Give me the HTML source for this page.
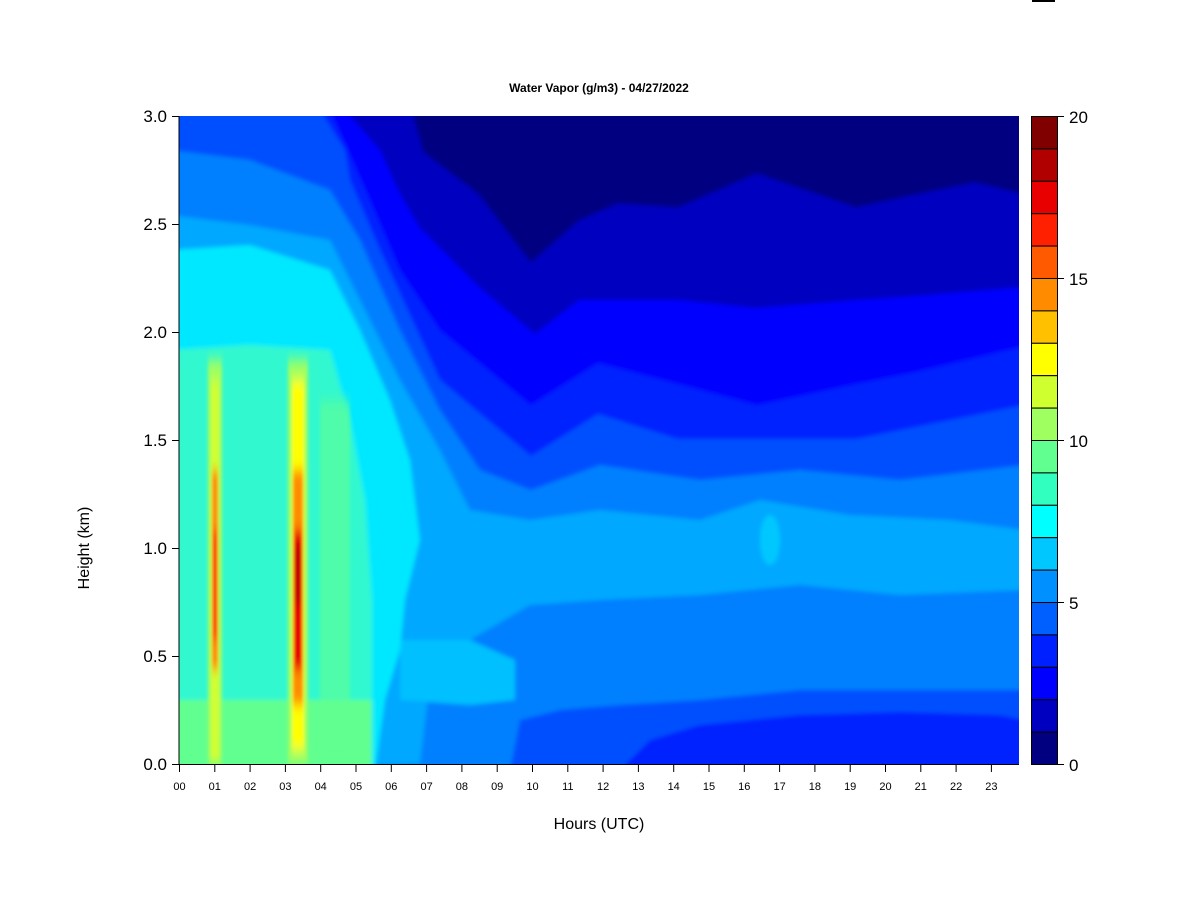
<!DOCTYPE html>
<html><head><meta charset="utf-8"><style>
html,body{margin:0;padding:0;background:#fff;}
svg{display:block;font-family:"Liberation Sans",Arial,sans-serif;}
</style></head><body>
<svg width="1200" height="900" viewBox="0 0 1200 900" xmlns="http://www.w3.org/2000/svg">
<rect width="1200" height="900" fill="#fff"/>
<rect x="1032" y="0" width="23" height="2" fill="#000"/>
<text x="599" y="92" font-size="12" font-weight="bold" text-anchor="middle">Water Vapor (g/m3) - 04/27/2022</text>
<defs>
<clipPath id="pc"><rect x="179" y="116" width="840" height="648"/></clipPath>
<filter id="bl" x="-5%" y="-5%" width="110%" height="110%"><feGaussianBlur stdDeviation="2"/></filter>
<filter id="bl2" x="-50%" y="-10%" width="200%" height="120%"><feGaussianBlur stdDeviation="1.5 6"/></filter>
</defs>
<g clip-path="url(#pc)">
<rect x="179" y="116" width="840" height="648" fill="#000080"/>
<g filter="url(#bl)">
<polygon fill="#0000c0" points="170,110 412,110 424,152 479,194 531,262 579,220 618,203 678,207 757,173 856,207 916,194 975,182 1025,194 1025,770 170,770"/>
<polygon fill="#0000ff" points="170,110 345,110 380,150 400,194 420,228 479,287 535,334 579,300 678,300 757,308 856,300 916,296 1025,287 1025,770 170,770"/>
<polygon fill="#0020ff" points="170,110 330,110 370,200 400,270 440,330 531,405 598,363 678,384 757,405 856,384 916,372 1025,346 1025,770 170,770"/>
<polygon fill="#0050ff" points="170,110 320,110 345,150 350,180 380,250 440,380 531,456 598,414 678,439 757,439 856,439 1025,405 1025,770 170,770"/>
<polygon fill="#0080ff" points="170,150 250,160 330,190 360,240 400,330 440,410 480,470 531,490 600,465 700,480 800,470 900,480 1025,465 1025,770 170,770"/>
<polygon fill="#00a8ff" points="170,215 250,225 330,240 360,300 400,380 440,450 470,510 530,520 600,510 700,520 760,500 850,515 950,520 1025,530 1025,590 900,595 800,585 700,595 600,600 530,605 470,640 430,680 420,764 170,770"/>
<polygon fill="#00c0ff" points="400,640 470,640 515,660 515,700 470,705 400,700"/>
<polygon fill="#00e8ff" points="170,250 250,245 330,270 360,330 390,400 410,460 420,540 405,600 400,650 385,700 375,770 170,770"/>
<ellipse cx="770" cy="540" rx="10" ry="25" fill="#00c8ff"/>
<polygon fill="#30f8d0" points="170,350 250,345 330,350 350,420 365,500 372,600 372,770 170,770"/>
<polygon fill="#60ff90" points="170,700 372,700 372,770 170,770"/>
<polygon fill="#0050ff" points="510,770 520,720 560,710 620,705 700,700 800,690 900,690 1025,690 1025,770"/>
<polygon fill="#0020ff" points="620,770 650,740 700,725 800,715 900,712 1000,715 1025,720 1025,770"/>
</g>
<g filter="url(#bl2)">
<rect x="208" y="360" width="14" height="404" fill="#a0ff60"/>
<rect x="288" y="360" width="20" height="404" fill="#a0ff60"/>
<rect x="320" y="400" width="30" height="340" fill="#60ff90" opacity="0.6"/>
<rect x="211" y="380" width="8" height="384" fill="#d0ff30"/>
<rect x="292" y="380" width="12" height="370" fill="#ffff00"/>
<rect x="212" y="470" width="6" height="200" fill="#ff8c00"/>
<rect x="293" y="470" width="10" height="235" fill="#ff8c00"/>
<rect x="213" y="530" width="4" height="110" fill="#ff2000"/>
<rect x="294" y="530" width="8" height="140" fill="#e80000"/>
<rect x="295" y="545" width="6" height="60" fill="#c00000"/>
</g>
</g>
<g stroke="#000" stroke-width="1" fill="none">
<line x1="179" y1="116" x2="179" y2="764"/>
<line x1="179" y1="764.5" x2="1019" y2="764.5"/>
<line x1="172" y1="116.5" x2="179" y2="116.5"/>
<line x1="172" y1="224.5" x2="179" y2="224.5"/>
<line x1="172" y1="332.5" x2="179" y2="332.5"/>
<line x1="172" y1="440.5" x2="179" y2="440.5"/>
<line x1="172" y1="548.5" x2="179" y2="548.5"/>
<line x1="172" y1="656.5" x2="179" y2="656.5"/>
<line x1="172" y1="764.5" x2="179" y2="764.5"/>
</g>
<g font-size="17" text-anchor="end">
<text x="167" y="122">3.0</text>
<text x="167" y="230">2.5</text>
<text x="167" y="338">2.0</text>
<text x="167" y="446">1.5</text>
<text x="167" y="554">1.0</text>
<text x="167" y="662">0.5</text>
<text x="167" y="770">0.0</text>
</g>
<text transform="translate(89,548) rotate(-90)" font-size="16" text-anchor="middle">Height (km)</text>
<text x="599" y="829" font-size="16" text-anchor="middle">Hours (UTC)</text>
<g stroke="#000">
<line x1="179.5" y1="764" x2="179.5" y2="772"/><line x1="214.8" y1="764" x2="214.8" y2="772"/><line x1="250.1" y1="764" x2="250.1" y2="772"/><line x1="285.4" y1="764" x2="285.4" y2="772"/><line x1="320.7" y1="764" x2="320.7" y2="772"/><line x1="356" y1="764" x2="356" y2="772"/><line x1="391.3" y1="764" x2="391.3" y2="772"/><line x1="426.6" y1="764" x2="426.6" y2="772"/><line x1="461.9" y1="764" x2="461.9" y2="772"/><line x1="497.2" y1="764" x2="497.2" y2="772"/><line x1="532.5" y1="764" x2="532.5" y2="772"/><line x1="567.8" y1="764" x2="567.8" y2="772"/><line x1="603.1" y1="764" x2="603.1" y2="772"/><line x1="638.4" y1="764" x2="638.4" y2="772"/><line x1="673.7" y1="764" x2="673.7" y2="772"/><line x1="709" y1="764" x2="709" y2="772"/><line x1="744.3" y1="764" x2="744.3" y2="772"/><line x1="779.6" y1="764" x2="779.6" y2="772"/><line x1="814.9" y1="764" x2="814.9" y2="772"/><line x1="850.2" y1="764" x2="850.2" y2="772"/><line x1="885.5" y1="764" x2="885.5" y2="772"/><line x1="920.8" y1="764" x2="920.8" y2="772"/><line x1="956.1" y1="764" x2="956.1" y2="772"/><line x1="991.4" y1="764" x2="991.4" y2="772"/>
</g>
<g font-size="11" text-anchor="middle">
<text x="179.5" y="790">00</text><text x="214.8" y="790">01</text><text x="250.1" y="790">02</text><text x="285.4" y="790">03</text><text x="320.7" y="790">04</text><text x="356" y="790">05</text><text x="391.3" y="790">06</text><text x="426.6" y="790">07</text><text x="461.9" y="790">08</text><text x="497.2" y="790">09</text><text x="532.5" y="790">10</text><text x="567.8" y="790">11</text><text x="603.1" y="790">12</text><text x="638.4" y="790">13</text><text x="673.7" y="790">14</text><text x="709" y="790">15</text><text x="744.3" y="790">16</text><text x="779.6" y="790">17</text><text x="814.9" y="790">18</text><text x="850.2" y="790">19</text><text x="885.5" y="790">20</text><text x="920.8" y="790">21</text><text x="956.1" y="790">22</text><text x="991.4" y="790">23</text>
</g>
<g stroke="#000" stroke-width="1">
<rect x="1031.5" y="116.5" width="26" height="32.4" fill="#800000"/>
<rect x="1031.5" y="148.9" width="26" height="32.4" fill="#b00000"/>
<rect x="1031.5" y="181.3" width="26" height="32.4" fill="#e80000"/>
<rect x="1031.5" y="213.7" width="26" height="32.4" fill="#ff2000"/>
<rect x="1031.5" y="246.1" width="26" height="32.4" fill="#ff5a00"/>
<rect x="1031.5" y="278.5" width="26" height="32.4" fill="#ff8c00"/>
<rect x="1031.5" y="310.9" width="26" height="32.4" fill="#ffc000"/>
<rect x="1031.5" y="343.3" width="26" height="32.4" fill="#ffff00"/>
<rect x="1031.5" y="375.7" width="26" height="32.4" fill="#d0ff30"/>
<rect x="1031.5" y="408.1" width="26" height="32.4" fill="#a0ff60"/>
<rect x="1031.5" y="440.5" width="26" height="32.4" fill="#60ff90"/>
<rect x="1031.5" y="472.9" width="26" height="32.4" fill="#30ffc0"/>
<rect x="1031.5" y="505.3" width="26" height="32.4" fill="#00ffff"/>
<rect x="1031.5" y="537.7" width="26" height="32.4" fill="#00c8ff"/>
<rect x="1031.5" y="570.1" width="26" height="32.4" fill="#0090ff"/>
<rect x="1031.5" y="602.5" width="26" height="32.4" fill="#0060ff"/>
<rect x="1031.5" y="634.9" width="26" height="32.4" fill="#0020ff"/>
<rect x="1031.5" y="667.3" width="26" height="32.4" fill="#0000ff"/>
<rect x="1031.5" y="699.7" width="26" height="32.4" fill="#0000c0"/>
<rect x="1031.5" y="732.1" width="26" height="32.4" fill="#000080"/>
<line x1="1057" y1="116.5" x2="1064" y2="116.5"/>
<line x1="1057" y1="278.5" x2="1064" y2="278.5"/>
<line x1="1057" y1="440.5" x2="1064" y2="440.5"/>
<line x1="1057" y1="602.5" x2="1064" y2="602.5"/>
<line x1="1057" y1="764.5" x2="1064" y2="764.5"/>
</g>
<g font-size="17">
<text x="1069" y="123">20</text>
<text x="1069" y="285">15</text>
<text x="1069" y="447">10</text>
<text x="1069" y="609">5</text>
<text x="1069" y="771">0</text>
</g>
</svg>
</body></html>
